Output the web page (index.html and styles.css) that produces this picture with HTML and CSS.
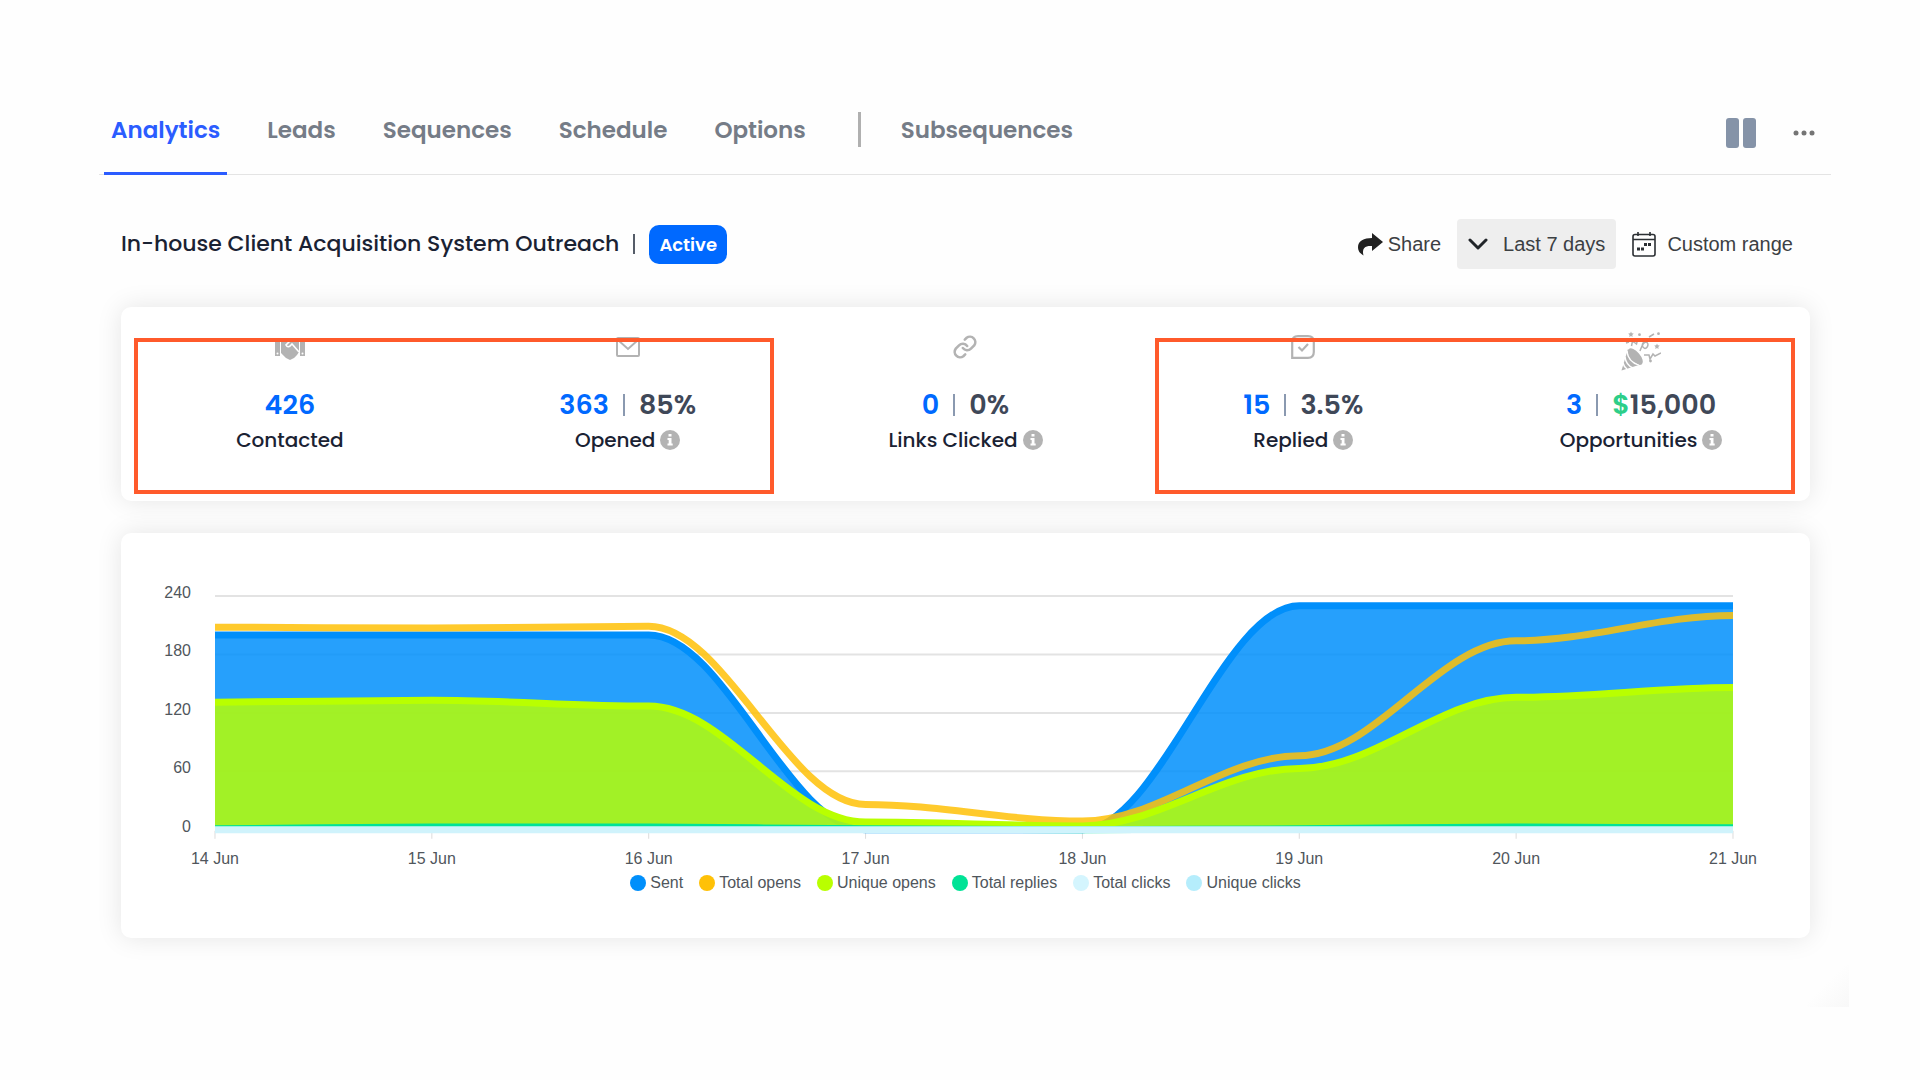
FILE: index.html
```
<!DOCTYPE html>
<html lang="en">
<head>
    <meta charset="UTF-8">
    <meta name="viewport" content="width=device-width, initial-scale=1.0">
    <title>Campaign Analytics</title>
    <link rel="stylesheet" href="styles.css">
</head>
<body>
    <svg class="defs" width="0" height="0" aria-hidden="true">
        <symbol id="info" viewBox="0 0 20 20">
            <circle cx="10" cy="10" r="10" fill="#b3b3b3"/>
            <path d="M8.500 4h3v2.600h-3zM7.500 8h4v5.500h1.200v2H7.500v-2h1.200V10H7.500z" fill="#fff"/>
        </symbol>
    </svg>

    <header class="topbar">
        <nav class="tabs">
            <a class="tab active" href="#">Analytics</a>
            <a class="tab" href="#">Leads</a>
            <a class="tab" href="#">Sequences</a>
            <a class="tab" href="#">Schedule</a>
            <a class="tab" href="#">Options</a>
            <span class="tab-divider"></span>
            <a class="tab" href="#">Subsequences</a>
        </nav>
        <div class="topbar-actions">
            <button class="icon-btn" type="button" aria-label="Pause">
                <svg width="30" height="30" viewBox="0 0 30 30" fill="#8593a8"><rect width="13" height="30" rx="3"/><rect x="17" width="13" height="30" rx="3"/></svg>
            </button>
            <button class="icon-btn" type="button" aria-label="More">
                <svg width="22" height="6" viewBox="0 0 22 6" fill="#757575"><circle cx="3" cy="3" r="2.500"/><circle cx="11" cy="3" r="2.500"/><circle cx="19" cy="3" r="2.500"/></svg>
            </button>
        </div>
    </header>

    <main class="content">
        <div class="campaign">
            <h1>In-house Client Acquisition System Outreach</h1>
            <span class="bar"></span>
            <span class="badge">Active</span>
            <div class="campaign-actions">
                <button class="action share" type="button">
                    <svg width="25" height="23" viewBox="0 0 25 23" fill="#212121"><path d="M14 0l11 9-11 9v-5C8 12.500 3.500 14.500 5.500 22.500 1.500 20 0 17.500 0 14 0 8 6 5 14 5z"/></svg>
                    Share
                </button>
                <button class="action range" type="button">
                    <svg width="20" height="12" viewBox="0 0 20 12" fill="none" stroke="#212529" stroke-width="3" stroke-linecap="round" stroke-linejoin="round"><path d="M2 2l8 8 8-8"/></svg>
                    Last 7 days
                </button>
                <button class="action custom" type="button">
                    <svg width="24" height="25" viewBox="0 0 24 25" fill="none" stroke="#2b2f33" stroke-width="1.600"><rect x="1" y="2.500" width="22" height="21.500" rx="2"/><path d="M1 7.500h22M6 0v4M18 0v4"/><path d="M5 17h3M9 17h3M12 12.500h3M16 12.500h3" stroke-width="3"/></svg>
                    Custom range
                </button>
            </div>
        </div>

        <section class="card stats">
            <div class="stat">
                <div class="stat-icon">
                    <svg width="30" height="26" viewBox="0 0 30 26" fill="#b3b3b3"><path d="M0 5h5v17H0zM25 5h5v17h-5z"/><path d="M6 5l6-1 3 2 4-2 5 2v12l-2 3-3 3-4 2-4-2-5-5z"/><g fill="#fff"><circle cx="2.500" cy="19.500" r="1"/><circle cx="27.500" cy="19.500" r="1"/></g><path d="M17 5l-6 6q2 4 6-1l7 8" fill="none" stroke="#fff" stroke-width="1.600"/></svg>
                </div>
                <div class="stat-value"><span class="blue">426</span></div>
                <div class="stat-label">Contacted</div>
            </div>
            <div class="stat">
                <div class="stat-icon">
                    <svg width="24" height="20" viewBox="0 0 24 20" fill="none" stroke="#b3b3b3" stroke-width="2"><rect x="1" y="1" width="22" height="18" rx="1"/><path d="M2 3l10 9 10-9"/></svg>
                </div>
                <div class="stat-value"><span class="blue">363</span><span class="sep"></span><span>85%</span></div>
                <div class="stat-label">Opened <svg class="info"><use href="#info"/></svg></div>
            </div>
            <div class="stat">
                <div class="stat-icon">
                    <svg width="26" height="26" viewBox="0 0 24 24" fill="none" stroke="#b3b3b3" stroke-width="2.400" stroke-linecap="round"><path d="M10 13a5 5 0 0 0 7.500.5l3-3a5 5 0 0 0-7-7l-1.700 1.700"/><path d="M14 11a5 5 0 0 0-7.500-.5l-3 3a5 5 0 0 0 7 7l1.700-1.700"/></svg>
                </div>
                <div class="stat-value"><span class="blue">0</span><span class="sep"></span><span>0%</span></div>
                <div class="stat-label">Links Clicked <svg class="info"><use href="#info"/></svg></div>
            </div>
            <div class="stat">
                <div class="stat-icon">
                    <svg width="24" height="24" viewBox="0 0 24 24" fill="none" stroke="#b3b3b3" stroke-width="2.200"><path d="M1.200 22.800V7q0-5.800 5.800-5.800h10q5.800 0 5.800 5.800v10q0 5.800-5.800 5.800z"/><path d="M7.500 12l3.500 3.500 6-6.500"/></svg>
                </div>
                <div class="stat-value"><span class="blue">15</span><span class="sep"></span><span>3.5%</span></div>
                <div class="stat-label">Replied <svg class="info"><use href="#info"/></svg></div>
            </div>
            <div class="stat">
                <div class="stat-icon">
                    <svg width="40" height="48" viewBox="0 -8 40 48" fill="#b3b3b3"><path d="M7 18L.5 39.500 21 33z"/><path d="M6 20q1 11 12 14M4 26q1 8 8 11M2 32q1 4 4 6" fill="none" stroke="#fff" stroke-width="1.500"/><ellipse cx="14.500" cy="25.500" rx="4.500" ry="10" transform="rotate(-41 14.500 25.500)"/><path d="M10 .5l.8 1.700 1.900.3-1.400 1.400.3 2-1.600-.9-1.700.9.3-2-1.400-1.400 2-.3zM36 12.500l.8 1.700 1.900.3-1.400 1.400.3 2-1.600-.9-1.700.9.3-2-1.400-1.400 2-.3z"/><circle cx="18.500" cy="3.700" r="1.400"/><circle cx="37.500" cy="2.700" r="1.400"/><circle cx="29.500" cy="30" r="1.400"/><path d="M5 12l3-1M10.500 15l1-5 4 3 1-4M19 20c2-5 3-9 6-9 4 1 1 8-2 6-4-3 0-8 6-9M23 24l5 0 1 4 3-5 2 2 6-3M28 6l5-3" fill="none" stroke="#b3b3b3" stroke-width="1.500"/></svg>
                </div>
                <div class="stat-value"><span class="blue">3</span><span class="sep"></span><span><span class="green">$</span>15,000</span></div>
                <div class="stat-label">Opportunities <svg class="info"><use href="#info"/></svg></div>
            </div>
            <div class="highlight highlight-left"></div>
            <div class="highlight highlight-right"></div>
        </section>

        <section class="card chart">
            <svg id="chart" viewBox="0 0 1690 320" role="img" aria-label="Emails sent, opened, replied and clicked by day"></svg>
            <ul class="legend">
                <li><i class="dot sent"></i>Sent</li>
                <li><i class="dot opens"></i>Total opens</li>
                <li><i class="dot unique-opens"></i>Unique opens</li>
                <li><i class="dot replies"></i>Total replies</li>
                <li><i class="dot clicks"></i>Total clicks</li>
                <li><i class="dot unique-clicks"></i>Unique clicks</li>
            </ul>
        </section>
    </main>
    <div class="corner"></div>

    <script>
        const days = ["14 Jun", "15 Jun", "16 Jun", "17 Jun", "18 Jun", "19 Jun", "20 Jun", "21 Jun"];
        const series = [
            { name: "sent", data: [200, 200, 200, 0, 0, 230, 230, 230] },
            { name: "opens", data: [208, 207, 209, 26, 9, 76, 194, 220] },
            { name: "unique-opens", data: [131, 133, 127, 8, 4, 63, 136, 146] },
            { name: "replies", data: [1, 3, 3, 1, 0, 1, 3, 2] },
            { name: "clicks", data: [0, 0, 0, 0, 0, 0, 0, 0] }
        ];
        const left = 94, step = 217, right = left + step * 7, base = 297;
        const x = i => left + i * step;
        const y = v => base - v * 234 / 240;

        // smooth line with flat tangents at every point
        function linePath(data) {
            let d = `M${x(0)} ${y(data[0])}`;
            for (let i = 1; i < data.length; i++) {
                d += ` C${x(i - 1) + step * 0.35} ${y(data[i - 1])} ${x(i) - step * 0.35} ${y(data[i])} ${x(i)} ${y(data[i])}`;
            }
            return d;
        }

        let svg = `<clipPath id="plot"><rect x="${left}" y="40" width="${right - left}" height="262"/></clipPath>`;
        for (let v = 0; v <= 240; v += 60) {
            svg += `<line class="grid" x1="${left}" x2="${right}" y1="${y(v)}" y2="${y(v)}"/>`;
            svg += `<text class="axis" x="70" y="${y(v) + 2}" text-anchor="end">${v}</text>`;
        }
        days.forEach((day, i) => {
            svg += `<line class="tick" x1="${x(i)}" x2="${x(i)}" y1="298" y2="306"/>`;
            svg += `<text class="axis" x="${x(i)}" y="331" text-anchor="middle">${day}</text>`;
        });
        svg += `<g clip-path="url(#plot)">`;
        series.forEach(s => {
            const d = linePath(s.data);
            svg += `<path class="area ${s.name}" d="${d} L${right} ${base} L${left} ${base} Z"/><path class="line ${s.name}" d="${d}"/>`;
        });
        svg += `</g>`;
        document.getElementById("chart").innerHTML = svg;
    </script>
</body>
</html>
```
FILE: styles.css
```
body, html {
    margin: 0;
    padding: 0;
}

body {
    position: relative;
    box-sizing: border-box;
    padding: 96px 89px 69px 99px;
    background-color: #fefefe;
    font-family: Poppins, Inter, sans-serif;
    color: #1a2233;
}

button {
    border: 0;
    padding: 0;
    background: none;
    font: inherit;
    color: inherit;
}

.defs {
    position: absolute;
}

.topbar {
    display: flex;
    justify-content: space-between;
    border-bottom: 1px solid #e4e4e4;
    height: 78px;
}

.tabs {
    display: flex;
    gap: 33px;
    margin-left: 5px;
}

.tab {
    height: 76px;
    padding: 0 7px;
    border-bottom: 3px solid transparent;
    line-height: 68px;
    font-size: 23px;
    font-weight: 600;
    color: #757c87;
    text-decoration: none;
}

.tab.active {
    color: #2b5cff;
    border-color: #2b5cff;
}

.tab-divider {
    width: 3px;
    height: 35px;
    margin: 16px 0 0 12px;
    background-color: #b0b0b0;
}

.topbar-actions {
    display: flex;
    gap: 37px;
    align-items: center;
    height: 74px;
    margin-right: 16px;
}

.icon-btn {
    display: flex;
}

.content {
    margin: 0 21px 0 22px;
}

.campaign {
    display: flex;
    align-items: center;
    height: 50px;
    margin-top: 44px;
}

.campaign h1 {
    margin: 0;
    font-size: 22px;
    font-weight: 500;
    line-height: 32px;
}

.bar {
    width: 2px;
    height: 20px;
    margin: 0 14px;
    background-color: #555c68;
}

.badge {
    padding: 0 10px;
    border-radius: 10px;
    background-color: #0069ff;
    color: #fff;
    font-size: 18px;
    font-weight: 600;
    line-height: 39px;
}

.campaign-actions {
    display: flex;
    align-items: center;
    gap: 16px;
    margin-left: auto;
    margin-right: 17px;
    font-family: "Liberation Sans", Arial, sans-serif;
    font-size: 20px;
    color: #3c4043;
}

.action {
    display: flex;
    align-items: center;
    gap: 5px;
    height: 50px;
}

.range {
    gap: 15px;
    padding: 0 11px;
    border-radius: 4px;
    background-color: #eee;
}

.custom {
    gap: 11px;
}

.card {
    border-radius: 10px;
    background-color: #fff;
    box-shadow: 0 0 26px rgba(0, 0, 0, 0.1);
}

.stats {
    position: relative;
    display: grid;
    grid-template-columns: repeat(5, 1fr);
    height: 194px;
    margin-top: 38px;
}

.stat {
    display: flex;
    flex-direction: column;
    align-items: center;
    padding-top: 20px;
}

.stat-icon {
    display: flex;
    align-items: center;
    justify-content: center;
    height: 40px;
}

.stat-value {
    display: flex;
    align-items: center;
    height: 40px;
    margin-top: 18px;
    font-size: 27px;
    font-weight: 600;
    color: #3f4858;
}

.blue {
    color: #0069ff;
}

.green {
    color: #2dce89;
}

.sep {
    width: 2px;
    height: 22px;
    margin: 0 14px;
    background-color: #8a99b0;
}

.stat-label {
    display: flex;
    align-items: center;
    gap: 5px;
    height: 30px;
    font-size: 20px;
    font-weight: 500;
}

.info {
    width: 20px;
    height: 20px;
}

/* callout frames over the key numbers */
.highlight {
    position: absolute;
    top: 31px;
    bottom: 7px;
    width: calc(38% - 2px);
    box-sizing: border-box;
    border: 4px solid #ff5a2b;
}

.highlight-left {
    left: 13px;
}

.highlight-right {
    right: 15px;
}

.chart {
    margin-top: 32px;
    padding-bottom: 43px;
}

.chart svg {
    display: block;
    width: 100%;
    overflow: visible;
}

.grid {
    stroke: #e3e3e3;
    stroke-width: 2;
}

.tick {
    stroke: #dcdcdc;
    stroke-width: 1;
}

.axis {
    font-family: "Liberation Sans", Arial, sans-serif;
    font-size: 16px;
    fill: #50565c;
}

.area {
    fill-opacity: 0.85;
}

.area.sent { fill: #008ffb; }
.area.opens { fill: none; }
.area.unique-opens { fill: #b9ff00; }
.area.replies { fill: #00e396; }
.area.clicks { fill: none; }

.line {
    fill: none;
    stroke-width: 7;
}

.line.sent { stroke: #008ffb; }
.line.opens { stroke: #ffc107; stroke-opacity: 0.85; }
.line.unique-opens { stroke: #b9ff00; }
.line.replies { stroke: #00e396; }
.line.clicks { stroke: #d0f3fc; }

.legend {
    display: flex;
    justify-content: center;
    gap: 16px;
    margin: 18px 0 0;
    padding: 0;
    list-style: none;
    font-family: "Liberation Sans", Arial, sans-serif;
    font-size: 16px;
    line-height: 24px;
    color: #50565c;
}

.legend li {
    display: flex;
    align-items: center;
    gap: 4px;
}

.dot {
    width: 16px;
    height: 16px;
    border-radius: 50%;
}

.dot.sent { background-color: #008ffb; }
.dot.opens { background-color: #ffc107; }
.dot.unique-opens { background-color: #b9ff00; }
.dot.replies { background-color: #00e396; }
.dot.clicks { background-color: #d4f5fe; }
.dot.unique-clicks { background-color: #b5edfc; }

.corner {
    position: absolute;
    right: 71px;
    bottom: -8px;
    width: 42px;
    height: 50px;
    background: linear-gradient(135deg, #fefefe 40%, #f7f7f7);
}
```
